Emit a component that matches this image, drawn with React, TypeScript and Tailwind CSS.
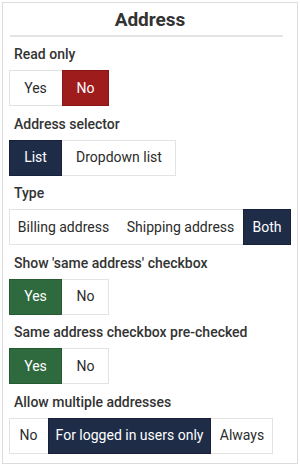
import React, { useState } from 'react';

type Tone = 'red' | 'navy' | 'green';

interface Option {
  label: string;
  width: string;
}

interface SettingRowProps {
  label: string;
  options: Option[];
  initial: number;
  tone: Tone;
}

const toneClasses: Record<Tone, string> = {
  red: 'bg-[#9e1c1c] border-[#861616] text-white',
  navy: 'bg-[#1e2c47] border-[#17223a] text-white',
  green: 'bg-[#2e6a3e] border-[#255a33] text-white',
};

/**
 * SettingRow
 *
 * A label with a segmented button group below it.
 */
const SettingRow: React.FC<SettingRowProps> = ({ label, options, initial, tone }) => {
  const [selected, setSelected] = useState(initial);

  return (
    <div className="flex flex-col">
      <div className="h-[20px] pl-[5px] text-[14px] leading-[20px] font-medium text-[#333]">
        {label}
      </div>
      <div className="mt-[6px] flex">
        <div className="flex h-[36px] border border-[#e3e3e3] bg-white">
          {options.map((opt, i) => (
            <button
              key={opt.label}
              type="button"
              onClick={() => setSelected(i)}
              className={`${opt.width} -my-px flex items-center justify-center whitespace-nowrap text-[14px] ${
                i === selected ? `${toneClasses[tone]} border` : 'text-[#2b2b2b]'
              } ${i === 0 ? '-ml-px' : ''} ${i === options.length - 1 ? '-mr-px' : ''}`}
            >
              {opt.label}
            </button>
          ))}
        </div>
      </div>
    </div>
  );
};

const App: React.FC = () => {
  return (
    <div className="w-[300px] h-[466px] bg-white p-[2px]" style={{ fontFamily: 'Roboto, "Liberation Sans", sans-serif' }}>
      <div className="h-[462px] w-[296px] border border-[#dcdcdc] px-[6px] pt-[5px]">
        <h1 className="h-[24px] text-center text-[19px] leading-[24px] font-bold text-[#333]">Address</h1>
        <div className="mt-[3px] ml-[1px] h-[2px] w-[273px] bg-[#e4e4e4]" />

        <div className="mt-[7px] flex flex-col gap-[7.5px]">
          <SettingRow
            label="Read only"
            tone="red"
            initial={1}
            options={[
              { label: 'Yes', width: 'w-[53px]' },
              { label: 'No', width: 'w-[47px]' },
            ]}
          />
          <SettingRow
            label="Address selector"
            tone="navy"
            initial={0}
            options={[
              { label: 'List', width: 'w-[53px]' },
              { label: 'Dropdown list', width: 'w-[114px]' },
            ]}
          />
          <SettingRow
            label="Type"
            tone="navy"
            initial={2}
            options={[
              { label: 'Billing address', width: 'w-[109px]' },
              { label: 'Shipping address', width: 'w-[125px]' },
              { label: 'Both', width: 'w-[48px]' },
            ]}
          />
          <SettingRow
            label="Show 'same address' checkbox"
            tone="green"
            initial={0}
            options={[
              { label: 'Yes', width: 'w-[53px]' },
              { label: 'No', width: 'w-[47px]' },
            ]}
          />
          <SettingRow
            label="Same address checkbox pre-checked"
            tone="green"
            initial={0}
            options={[
              { label: 'Yes', width: 'w-[53px]' },
              { label: 'No', width: 'w-[47px]' },
            ]}
          />
          <SettingRow
            label="Allow multiple addresses"
            tone="navy"
            initial={1}
            options={[
              { label: 'No', width: 'w-[39px]' },
              { label: 'For logged in users only', width: 'w-[163px]' },
              { label: 'Always', width: 'w-[62px]' },
            ]}
          />
        </div>
      </div>
    </div>
  );
};

export default App;
